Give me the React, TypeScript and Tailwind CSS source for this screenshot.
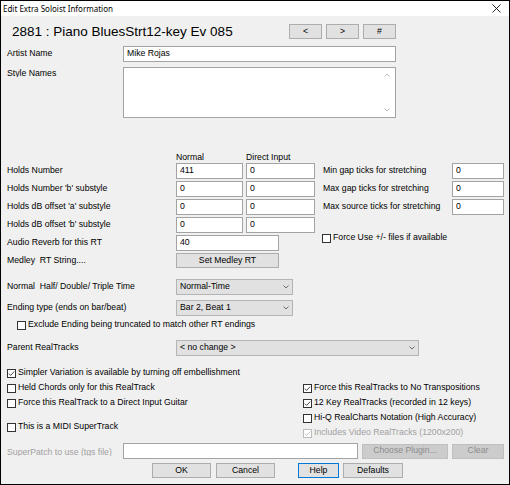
import { type ReactNode } from 'react'

const font = { fontFamily: '"Liberation Sans", Arial, sans-serif' }

function Field({ w, h = 'h-[16px]', value = '' }: { w: string; h?: string; value?: string }) {
  return (
    <div className={`${w} ${h} shrink-0 bg-white border border-[#a3a3a3] flex items-center pl-[3px] text-[8.7px] text-black`}>
      {value}
    </div>
  )
}

function Btn({ w, children, className = '' }: { w: string; children: ReactNode; className?: string }) {
  return (
    <div className={`${w} h-[15px] shrink-0 bg-[#e1e1e1] border border-[#adadad] flex items-center justify-center text-[8.7px] text-black ${className}`}>
      {children}
    </div>
  )
}

function Chevron({ color = '#606060' }: { color?: string }) {
  return (
    <svg width="6" height="4" viewBox="0 0 6 4">
      <polyline points="0.5,0.5 3,3 5.5,0.5" fill="none" stroke={color} strokeWidth="0.9" />
    </svg>
  )
}

function Select({ w, value }: { w: string; value: string }) {
  return (
    <div className={`${w} h-[16px] shrink-0 bg-[#e1e1e1] border border-[#b4b4b4] flex items-center justify-between pl-[3px] pr-[3px] text-[8.7px] text-black`}>
      <span>{value}</span>
      <Chevron />
    </div>
  )
}

function Check({ checked = false, disabled = false, label }: { checked?: boolean; disabled?: boolean; label: string }) {
  const c = disabled ? '#bcbcbc' : '#333333'
  return (
    <div className={`flex items-center gap-[2px] h-[10px] text-[8.7px] ${disabled ? 'text-[#a0a0a0]' : 'text-black'}`}>
      <svg width="9" height="9" viewBox="0 0 9 9" className="shrink-0">
        <rect x="0.5" y="0.5" width="8" height="8" fill="#fff" stroke={c} strokeWidth="1" />
        {checked && <polyline points="1.8,4.6 3.6,6.4 7.2,2.6" fill="none" stroke={c} strokeWidth="0.9" />}
      </svg>
      <span className="whitespace-nowrap">{label}</span>
    </div>
  )
}

function Label({ w, children }: { w: string; children: ReactNode }) {
  return <div className={`${w} shrink-0 text-[8.7px] text-black whitespace-nowrap`}>{children}</div>
}

const holds = [
  ['Holds Number', '411', 'Min gap ticks for stretching'],
  ["Holds Number 'b' substyle", '0', 'Max gap ticks for stretching'],
  ["Holds dB offset 'a' substyle", '0', 'Max source ticks for stretching'],
  ["Holds dB offset 'b' substyle", '0', ''],
]

export default function App() {
  return (
    <div className="w-[510px] h-[485px] border border-black flex flex-col bg-[#f0f0f0] overflow-hidden" style={font}>
      <div className="h-[15px] shrink-0 bg-white flex items-center justify-between pl-[2px] pr-[8px]">
        <span className="text-[8px] text-black" style={{ fontFamily: '"Noto Sans", "Open Sans", sans-serif' }}>
          Edit Extra Soloist Information
        </span>
        <svg width="9" height="9" viewBox="0 0 9 9">
          <path d="M0.5 0.5 L8.5 8.5 M8.5 0.5 L0.5 8.5" stroke="#111" strokeWidth="0.9" />
        </svg>
      </div>

      <div className="flex flex-col pl-[6px]">
        {/* heading */}
        <div className="mt-[8px] h-[15px] flex items-center">
          <div className="w-[282px] pl-[5px] text-[13.5px] leading-[15px] text-black whitespace-nowrap">
            2881 : Piano BluesStrt12-key Ev 085
          </div>
          <div className="flex gap-[4px]">
            <Btn w="w-[33px]">&lt;</Btn>
            <Btn w="w-[33px]">&gt;</Btn>
            <Btn w="w-[33px]">#</Btn>
          </div>
        </div>

        {/* artist */}
        <div className="mt-[7px] flex items-center">
          <Label w="w-[116px]">Artist Name</Label>
          <Field w="w-[273px]" value="Mike Rojas" />
        </div>

        {/* style names */}
        <div className="mt-[5px] flex items-start">
          <div className="w-[116px] shrink-0 pt-[2px] h-[10px] overflow-hidden text-[8.7px] leading-[9px] text-black">Style Names</div>
          <div className="w-[273px] h-[51px] bg-white border border-[#a3a3a3] flex flex-col items-end justify-between pr-[5px] py-[5px]">
            <svg width="6" height="4" viewBox="0 0 6 4">
              <polyline points="0.5,3.5 3,1 5.5,3.5" fill="none" stroke="#b8b8b8" strokeWidth="0.9" />
            </svg>
            <Chevron color="#b8b8b8" />
          </div>
        </div>

        {/* column headers */}
        <div className="mt-[34px] h-[10px] flex items-center text-[8.7px] leading-[10px] text-black">
          <div className="w-[169px] shrink-0" />
          <div className="w-[70px] shrink-0">Normal</div>
          <div>Direct Input</div>
        </div>

        {holds.map(([label, val, right], i) => (
          <div key={label} className={`${i === 0 ? 'mt-[1px]' : 'mt-[2px]'} h-[16px] flex items-center`}>
            <Label w="w-[169px]">{label}</Label>
            <Field w="w-[67px]" value={val} />
            <div className="w-[3px] shrink-0" />
            <Field w="w-[69px]" value="0" />
            {right && (
              <>
                <div className="w-[8px] shrink-0" />
                <Label w="w-[129px]">{right}</Label>
                <Field w="w-[52px]" value="0" />
              </>
            )}
          </div>
        ))}

        <div className="mt-[2px] h-[16px] flex items-center">
          <Label w="w-[169px]">Audio Reverb for this RT</Label>
          <Field w="w-[103px]" value="40" />
          <div className="w-[43px] shrink-0" />
          <div className="-mt-[10px]">
            <Check label="Force Use +/- files if available" />
          </div>
        </div>

        <div className="mt-[2px] h-[15px] flex items-center">
          <Label w="w-[169px]">Medley&nbsp;&nbsp;RT String....</Label>
          <Btn w="w-[103px]">Set Medley RT</Btn>
        </div>

        <div className="mt-[11px] flex items-center">
          <Label w="w-[169px]">Normal&nbsp;&nbsp;Half/ Double/ Triple Time</Label>
          <Select w="w-[117px]" value="Normal-Time" />
        </div>

        <div className="mt-[5px] flex items-center">
          <Label w="w-[169px]">Ending type (ends on bar/beat)</Label>
          <Select w="w-[117px]" value="Bar 2, Beat 1" />
        </div>

        <div className="mt-[4px] pl-[10px]">
          <Check label="Exclude Ending being truncated to match other RT endings" />
        </div>

        <div className="mt-[10px] flex items-center">
          <Label w="w-[169px]">Parent RealTracks</Label>
          <Select w="w-[243px]" value="< no change >" />
        </div>

        <div className="mt-[12px]">
          <Check checked label="Simpler Variation is available by turning off embellishment" />
        </div>

        <div className="mt-[5px] flex">
          <div className="w-[296px] shrink-0 flex flex-col gap-[5px]">
            <Check label="Held Chords only for this RealTrack" />
            <Check label="Force this RealTrack to a Direct Input Guitar" />
            <div className="mt-[9px]">
              <Check label="This is a MIDI SuperTrack" />
            </div>
          </div>
          <div className="flex flex-col gap-[5px]">
            <Check checked label="Force this RealTracks to No Transpositions" />
            <Check checked label="12 Key RealTracks (recorded in 12 keys)" />
            <Check label="Hi-Q RealCharts Notation (High Accuracy)" />
            <Check checked disabled label="Includes Video RealTracks (1200x200)" />
          </div>
        </div>

        <div className="mt-[5px] h-[16px] flex items-center">
          <div className="w-[116px] shrink-0 h-[9px] overflow-hidden text-[8.7px] leading-[10px] text-[#a0a0a0] whitespace-nowrap">
            SuperPatch to use (tgs file)
          </div>
          <Field w="w-[235px]" />
          <div className="w-[4px] shrink-0" />
          <Btn w="w-[86px]" className="!bg-[#cccccc] !border-[#bfbfbf] !text-[#8c8c8c]">Choose Plugin...</Btn>
          <div className="w-[4px] shrink-0" />
          <Btn w="w-[52px]" className="!bg-[#cccccc] !border-[#bfbfbf] !text-[#8c8c8c]">Clear</Btn>
        </div>

        <div className="mt-[4px] flex items-center">
          <div className="w-[145px] shrink-0" />
          <Btn w="w-[59px]">OK</Btn>
          <div className="w-[5px] shrink-0" />
          <Btn w="w-[59px]">Cancel</Btn>
          <div className="w-[23px] shrink-0" />
          <Btn w="w-[41px]" className="!border-[#0078d7]">Help</Btn>
          <div className="w-[4px] shrink-0" />
          <Btn w="w-[60px]">Defaults</Btn>
        </div>
      </div>
    </div>
  )
}
